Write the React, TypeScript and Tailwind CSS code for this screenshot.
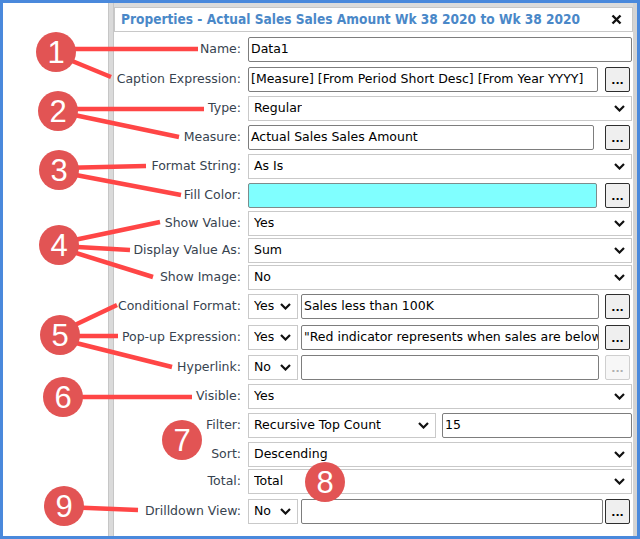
import React from 'react';

const Chevron = () => (
  <svg width="11" height="7" viewBox="0 0 11 7" className="shrink-0">
    <path d="M1 1l4.5 4.5L10 1" fill="none" stroke="#111" strokeWidth="2.2" />
  </svg>
);

const Label = ({ text }: { text: string }) => (
  <div className="w-[127px] shrink-0 text-right text-[#37434f] whitespace-nowrap">{text}</div>
);

const Select = ({ value, className = 'flex-1 min-w-0' }: { value: string; className?: string }) => (
  <div
    className={`h-full border border-[#c9c9c9] bg-white flex items-center justify-between pl-[5px] pr-[6px] text-black shrink-0 ${className}`}
  >
    <span className="whitespace-nowrap overflow-hidden">{value}</span>
    <Chevron />
  </div>
);

const Input = ({ value = '', className = 'flex-1 min-w-0' }: { value?: string; className?: string }) => (
  <div
    className={`h-full border border-[#7d7d7d] rounded-[2px] flex items-center pl-[2px] overflow-hidden whitespace-nowrap text-black ${className}`}
  >
    {value}
  </div>
);

const Dots = ({ disabled = false }: { disabled?: boolean }) => (
  <div
    className={`w-[25px] h-[25px] shrink-0 mr-[2px] rounded-[2px] border flex justify-center items-end pb-[5px] text-[11px] font-bold leading-none ${
      disabled ? 'border-[#cfcfcf] bg-[#f7f7f7] text-[#b0b0b0]' : 'border-[#2e2e2e] bg-[#efefef] text-black'
    }`}
  >
    ...
  </div>
);

const Row = ({ label, mt, children }: { label: string; mt: string; children: React.ReactNode }) => (
  <div className={`flex items-center h-[25px] gap-[7px] ${mt}`}>
    <Label text={label} />
    <div className="flex-1 min-w-0 h-full flex items-center">{children}</div>
  </div>
);

const circles = [
  { n: '1', x: 56, y: 52 },
  { n: '2', x: 58, y: 111 },
  { n: '3', x: 59, y: 170 },
  { n: '4', x: 59, y: 245 },
  { n: '5', x: 60, y: 335 },
  { n: '6', x: 63, y: 397 },
  { n: '7', x: 182, y: 440 },
  { n: '8', x: 325, y: 482 },
  { n: '9', x: 64, y: 506 },
];

const lines = [
  [60, 49, 198, 49],
  [60, 56, 111, 77],
  [60, 109, 204, 109],
  [60, 112, 179, 137],
  [60, 168, 146, 166],
  [60, 172, 181, 195],
  [60, 243, 160, 222],
  [60, 246, 130, 250],
  [60, 248, 153, 277],
  [60, 332, 117, 305],
  [60, 336, 118, 336],
  [60, 339, 172, 367],
  [63, 397, 192, 397],
  [64, 507, 138, 510],
];

export default function App() {
  return (
    <div className="relative w-[640px] h-[539px] overflow-hidden bg-white border-[3px] border-[#4a89dc] flex font-['DejaVu_Sans',sans-serif] text-[12.5px]">
      <div className="w-[105px] shrink-0" />
      <div className="w-[6px] shrink-0 bg-[#dadada] border-x border-[#c6c6c6]" />

      <div className="flex-1 min-w-0 flex flex-col pr-[1px]">
        <div className="h-[4px] bg-[#dcdcdc] -mr-[1px]" />
        <div className="h-[25px] border border-[#c8c8c8] -mr-[1px] flex items-center justify-between pl-[6px] pr-[10px]">
          <span className="font-['DejaVu_Sans_Condensed','DejaVu_Sans',sans-serif] font-bold text-[13.6px] text-[#4a88c8] whitespace-nowrap">
            Properties - Actual Sales Sales Amount Wk 38 2020 to Wk 38 2020
          </span>
          <svg width="11" height="11" viewBox="0 0 11 11">
            <path d="M1.5 1.5l8 8M9.5 1.5l-8 8" stroke="#111" strokeWidth="2.4" />
          </svg>
        </div>

        <Row label="Name:" mt="mt-[5px]">
          <Input value="Data1" />
        </Row>
        <Row label="Caption Expression:" mt="mt-[5px]">
          <Input value="[Measure] [From Period Short Desc] [From Year YYYY]" className="flex-1 min-w-0 mr-[7px]" />
          <Dots />
        </Row>
        <Row label="Type:" mt="mt-[4px]">
          <Select value="Regular" />
        </Row>
        <Row label="Measure:" mt="mt-[4px]">
          <Input value="Actual Sales Sales Amount" className="flex-1 min-w-0 mr-[11px]" />
          <Dots />
        </Row>
        <Row label="Format String:" mt="mt-[4px]">
          <Select value="As Is" />
        </Row>
        <Row label="Fill Color:" mt="mt-[4px]">
          <div className="flex-1 min-w-0 h-full mr-[8px] border border-[#7d8c8c] rounded-[2px] bg-[#80ffff]" />
          <Dots />
        </Row>
        <Row label="Show Value:" mt="mt-[3px]">
          <Select value="Yes" />
        </Row>
        <Row label="Display Value As:" mt="mt-[2px]">
          <Select value="Sum" />
        </Row>
        <Row label="Show Image:" mt="mt-[2px]">
          <Select value="No" />
        </Row>
        <Row label="Conditional Format:" mt="mt-[4px]">
          <Select value="Yes" className="w-[50px] mr-[3px]" />
          <Input value="Sales less than 100K" className="flex-1 min-w-0 mr-[6px]" />
          <Dots />
        </Row>
        <Row label="Pop-up Expression:" mt="mt-[6px]">
          <Select value="Yes" className="w-[50px] mr-[3px]" />
          <Input value={'"Red indicator represents when sales are below 100K"'} className="flex-1 min-w-0 mr-[6px]" />
          <Dots />
        </Row>
        <Row label="Hyperlink:" mt="mt-[5px]">
          <Select value="No" className="w-[50px] mr-[3px]" />
          <Input className="flex-1 min-w-0 mr-[6px]" />
          <Dots disabled />
        </Row>
        <Row label="Visible:" mt="mt-[4px]">
          <Select value="Yes" />
        </Row>
        <Row label="Filter:" mt="mt-[4px]">
          <Select value="Recursive Top Count" className="w-[188px] mr-[6px]" />
          <Input value="15" />
        </Row>
        <Row label="Sort:" mt="mt-[4px]">
          <Select value="Descending" />
        </Row>
        <Row label="Total:" mt="mt-[2px]">
          <Select value="Total" />
        </Row>
        <Row label="Drilldown View:" mt="mt-[5px]">
          <Select value="No" className="w-[50px] mr-[3px]" />
          <Input className="flex-1 min-w-0 mr-[2px]" />
          <Dots />
        </Row>
      </div>

      <div className="w-[4px] shrink-0 bg-[#d4d4d4]" />

      <svg className="absolute left-[-3px] top-[-3px] pointer-events-none" width="640" height="539" viewBox="0 0 640 539">
        {lines.map(([x1, y1, x2, y2], i) => (
          <line key={i} x1={x1} y1={y1} x2={x2} y2={y2} stroke="#ff4646" strokeWidth="4.5" />
        ))}
        {circles.map((c) => (
          <g key={c.n}>
            <circle cx={c.x} cy={c.y} r="20" fill="#e25454" />
            <text
              x={c.x}
              y={c.y + 11}
              textAnchor="middle"
              fill="#fff"
              fontSize="31"
              fontFamily="'Liberation Sans', Arial, sans-serif"
            >
              {c.n}
            </text>
          </g>
        ))}
      </svg>
    </div>
  );
}
